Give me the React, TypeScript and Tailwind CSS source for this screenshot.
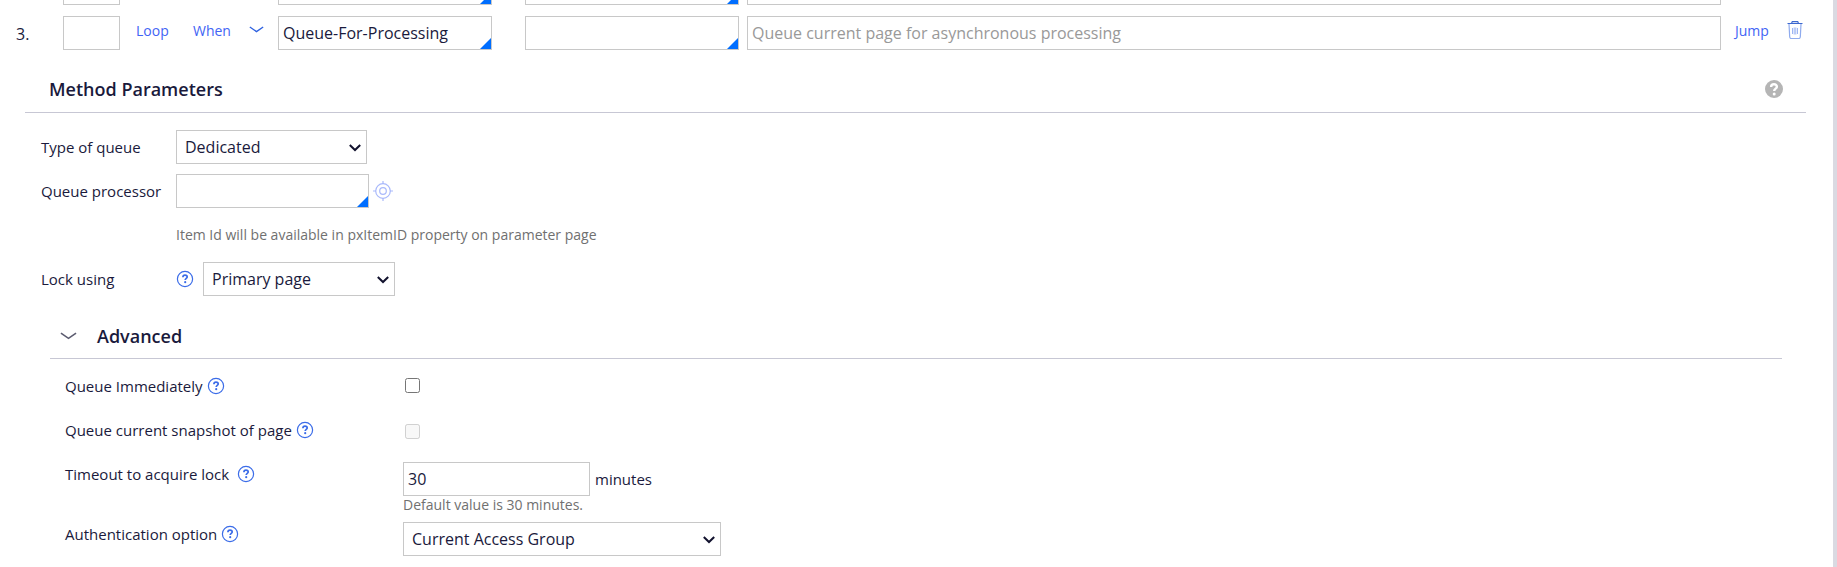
import { useState } from "react";
import type { ReactNode } from "react";

const inputClass =
  "h-[34px] w-full border border-[#c8c8c8] bg-white px-1 text-base text-[#1a1a3c] outline-none placeholder:text-[#999999]";

function HelpIcon() {
  return (
    <svg viewBox="0 0 18 18" className="block size-[18px]" fill="none">
      <circle cx="9" cy="9" r="7.6" stroke="#3b6ce8" strokeWidth="1.2" />
      <path
        d="M6.900 7.200C6.900 5.900 7.700 5.100 9 5.100s2.200.7 2.200 1.800c0 1.500-2 1.500-2 3.200"
        stroke="#3b6ce8"
        strokeWidth="1.7"
      />
      <circle cx="9.2" cy="12.2" r="1.1" fill="#3b6ce8" />
    </svg>
  );
}

function HelpButton({ topic }: { topic: string }) {
  return (
    <button type="button" aria-label={`Help: ${topic}`} className="shrink-0">
      <HelpIcon />
    </button>
  );
}

function ChevronIcon({ className }: { className: string }) {
  return (
    <svg viewBox="0 0 18 8" className={className} fill="none">
      <path d="M1 1l8 5.5L17 1" stroke="currentColor" strokeWidth="1.7" />
    </svg>
  );
}

function TrashIcon() {
  return (
    <svg viewBox="0 0 16 18" className="block h-[18px] w-4" fill="none">
      <path d="M2 3l.7 13q.2 1.500 1.500 1.500h7.600q1.300 0 1.500-1.500L14 3" stroke="#8fabee" strokeWidth="1.2" />
      <path d="M5.500 7v6M7.200 6.500v7M8.800 6.500v7M10.500 7v6" stroke="#9db5f3" strokeWidth="1" />
      <path d="M.5 2.500h15M4.500 2.500l.8-1.900h5.400l.8 1.900" stroke="#3d68cf" strokeWidth="1.2" />
    </svg>
  );
}

function TargetIcon() {
  return (
    <svg viewBox="0 0 20 20" className="block size-5" fill="none" stroke="#a9b9fb">
      <circle cx="10" cy="10" r="7.3" strokeWidth="1.2" />
      <circle cx="10" cy="10" r="3.300" strokeWidth="1.2" />
      <path d="M10 0v3M10 17v3M0 10h3M17 10h3" strokeWidth="1.2" />
    </svg>
  );
}

// Text box with the blue corner that marks a field with suggestions
function SuggestInput({
  id,
  label,
  defaultValue,
}: {
  id: string;
  label?: string;
  defaultValue?: string;
}) {
  return (
    <div className="relative">
      <input id={id} aria-label={label} defaultValue={defaultValue} className={inputClass} />
      <svg viewBox="0 0 11 11" className="pointer-events-none absolute right-px bottom-px size-[11px]">
        <path d="M11 0v11H0z" fill="#006eff" />
      </svg>
    </div>
  );
}

function Select({ id, options }: { id: string; options: string[] }) {
  return (
    <div className="relative">
      <select
        id={id}
        className="h-[34px] w-full appearance-none border border-[#c8c8c8] bg-white pr-8 pl-2 text-base text-[#1a1a3c] outline-none"
      >
        {options.map((option) => (
          <option key={option}>{option}</option>
        ))}
      </select>
      <svg
        viewBox="0 0 12 8"
        className="pointer-events-none absolute top-[14px] right-[6px] h-2 w-3"
        fill="none"
      >
        <path d="M.8 1L6 6l5.200-5" stroke="#12122e" strokeWidth="2" />
      </svg>
    </div>
  );
}

function StepRow({
  step,
  method,
  placeholder,
  collapsed,
}: {
  step: number;
  method?: string;
  placeholder?: string;
  collapsed?: boolean;
}) {
  return (
    <div className="flex h-[34px] pr-[26px] pl-4">
      <div className="w-[47px] pt-[6px] text-base">{!collapsed && `${step}.`}</div>
      <div className="w-[57px]">
        <input aria-label={`Step ${step} label`} className={inputClass} />
      </div>
      <div className="flex w-[158px] items-center pb-1 pl-4 text-sm text-[#4264f5]">
        {!collapsed && (
          <>
            <button type="button" className="w-[57px] text-left">
              Loop
            </button>
            <button type="button" className="w-[56px] text-left">
              When
            </button>
            <button type="button" aria-label="Expand step" className="pb-1">
              <ChevronIcon className="h-[7px] w-[15px] text-[#2f62e0]" />
            </button>
          </>
        )}
      </div>
      <div className="w-[214px]">
        <SuggestInput id={`method-${step}`} label="Method" defaultValue={method} />
      </div>
      <div className="ml-[33px] w-[214px]">
        <SuggestInput id={`page-${step}`} label="Step page" />
      </div>
      <div className="ml-2 flex-1">
        <input aria-label="Description" placeholder={placeholder} className={inputClass} />
      </div>
      <div className="flex w-[86px] items-center justify-between pb-1 pl-[14px]">
        {!collapsed && (
          <>
            <button type="button" className="text-sm text-[#4264f5]">
              Jump
            </button>
            <button type="button" aria-label="Delete step" className="mr-1 pb-0.5">
              <TrashIcon />
            </button>
          </>
        )}
      </div>
    </div>
  );
}

function Field({
  id,
  label,
  children,
}: {
  id: string;
  label: string;
  children: ReactNode;
}) {
  return (
    <div className="flex h-[34px] items-center">
      <label htmlFor={id} className="w-[135px] text-[15px]">
        {label}
      </label>
      {children}
    </div>
  );
}

function AdvancedField({
  id,
  label,
  wide,
  children,
}: {
  id: string;
  label: string;
  wide?: boolean;
  children: ReactNode;
}) {
  return (
    <div className="flex items-start">
      <div className={`flex h-6 w-[338px] items-center ${wide ? "gap-2" : "gap-1"}`}>
        <label htmlFor={id} className="text-[15px]">
          {label}
        </label>
        <HelpButton topic={label} />
      </div>
      {children}
    </div>
  );
}

export default function App() {
  const [open, setOpen] = useState(true);

  return (
    <div className="flex min-h-screen bg-white font-['Open_Sans',sans-serif] text-[#1a1a3c]">
      <main className="min-w-0 flex-1">
        {/* tail end of the previous step */}
        <div className="flex h-[5px] items-end overflow-hidden">
          <div className="w-full">
            <StepRow step={2} collapsed />
          </div>
        </div>
        <div className="mt-[11px]">
          <StepRow
            step={3}
            method="Queue-For-Processing"
            placeholder="Queue current page for asynchronous processing"
          />
        </div>

        <section className="mt-5 mr-[27px] ml-[25px]">
          <header className="flex h-[43px] items-center justify-between border-b border-[#c7c7d4] pr-[23px] pb-1 pl-6">
            <h2 className="text-lg font-semibold">Method Parameters</h2>
            <button type="button" aria-label="Help: Method Parameters">
              <svg viewBox="0 0 18 18" className="block size-[18px]" fill="none">
                <circle cx="9" cy="9" r="9" fill="#b5b5b5" />
                <path
                  d="M6.100 6.900C6.100 5.100 7.300 4.300 9 4.300s2.900.9 2.900 2.400c0 2-2.700 2-2.700 4.300"
                  stroke="#fff"
                  strokeWidth="2.400"
                />
                <circle cx="9.200" cy="14" r="1.500" fill="#fff" />
              </svg>
            </button>
          </header>

          <div className="flex flex-col gap-[10px] pt-[17px] pl-4">
            <Field id="queue-type" label="Type of queue">
              <div className="w-[191px]">
                <Select id="queue-type" options={["Dedicated", "Standard"]} />
              </div>
            </Field>
            <Field id="queue-processor" label="Queue processor">
              <div className="w-[193px]">
                <SuggestInput id="queue-processor" />
              </div>
              <button type="button" aria-label="Open queue processor" className="ml-1">
                <TargetIcon />
              </button>
            </Field>
            <p className="flex h-[34px] items-center pl-[135px] text-sm text-[#707070]">
              Item Id will be available in pxItemID property on parameter page
            </p>
            <Field id="lock-using" label="Lock using">
              <HelpButton topic="Lock using" />
              <div className="ml-[9px] w-48">
                <Select id="lock-using" options={["Primary page", "Step page"]} />
              </div>
            </Field>
          </div>

          <section className="mt-5 mr-6 ml-[25px]">
            <h3 className="border-b border-[#c7c7d4]">
              <button
                type="button"
                aria-expanded={open}
                onClick={() => setOpen(!open)}
                className="flex h-[42px] items-center gap-5 pb-0.5 pl-[10px] text-lg font-semibold"
              >
                <ChevronIcon className="h-2 w-[17px] text-[#5c5c70]" />
                Advanced
              </button>
            </h3>
            {open && (
              <div className="pt-[15px] pl-[15px]">
                <div className="h-11">
                  <AdvancedField id="immediate" label="Queue Immediately">
                    <input id="immediate" type="checkbox" className="mt-1 ml-[2px] size-[15px]" />
                  </AdvancedField>
                </div>
                <div className="h-11">
                  <AdvancedField id="snapshot" label="Queue current snapshot of page">
                    <input
                      id="snapshot"
                      type="checkbox"
                      disabled
                      className="mt-[6px] ml-[2px] size-[15px]"
                    />
                  </AdvancedField>
                </div>
                <div className="h-[60px]">
                  <AdvancedField id="timeout" label="Timeout to acquire lock" wide>
                    <div>
                      <div className="flex items-center gap-[5px]">
                        <div className="w-[187px]">
                          <input id="timeout" defaultValue="30" className={inputClass} />
                        </div>
                        <span className="text-[15px]">minutes</span>
                      </div>
                      <p className="text-sm leading-[18px] text-[#707070]">
                        Default value is 30 minutes.
                      </p>
                    </div>
                  </AdvancedField>
                </div>
                <AdvancedField id="auth" label="Authentication option">
                  <div className="w-[318px]">
                    <Select id="auth" options={["Current Access Group", "Access Group"]} />
                  </div>
                </AdvancedField>
              </div>
            )}
          </section>
        </section>
      </main>
      <div className="w-1 bg-[#dadae2]" />
    </div>
  );
}
